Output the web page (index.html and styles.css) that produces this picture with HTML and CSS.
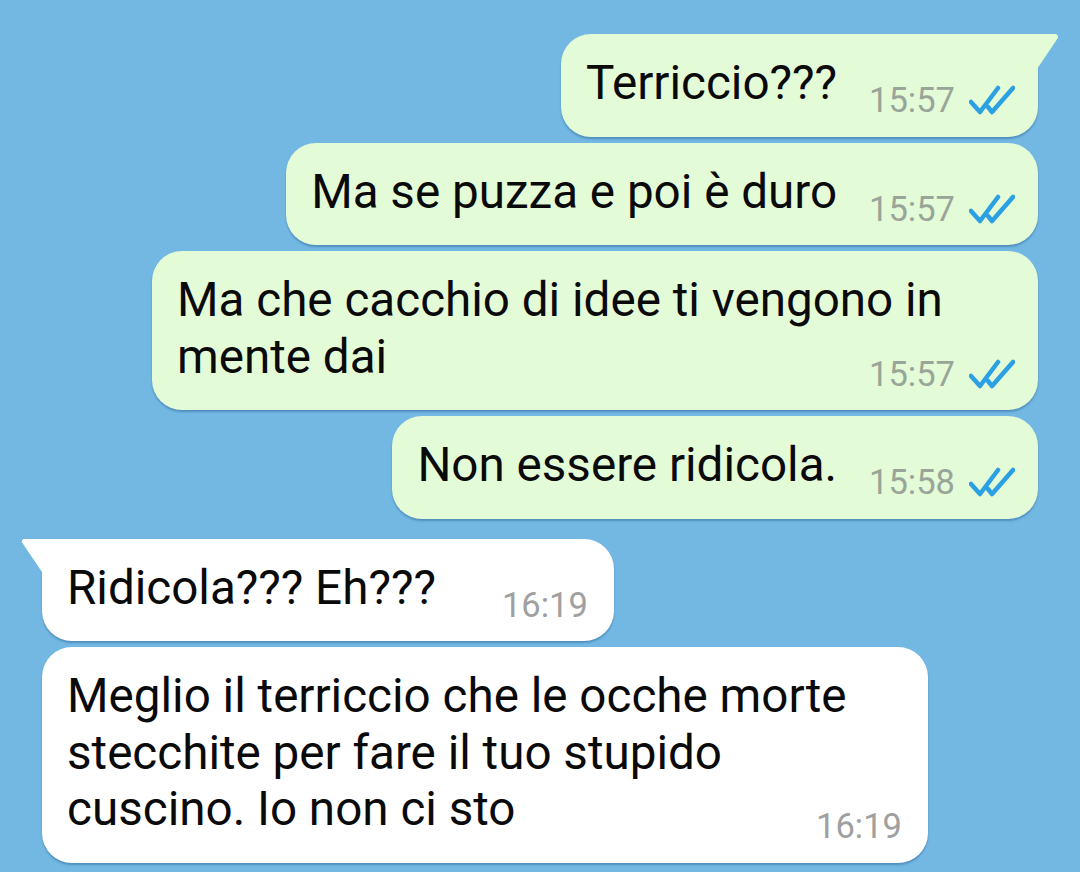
FILE: index.html
```html
<!DOCTYPE html>
<html lang="it">
<head>
<meta charset="utf-8">
<link rel="stylesheet" href="styles.css">
</head>
<body>
<div class="chat">
  <div class="group out">
    <div class="bubble first">Terriccio???<span class="meta"><span class="time">15:57</span><svg class="check" viewBox="0 0 46 30"><path d="M2 17 L11 27 L29 3 M19 22 L23 27 L44 3"/></svg></span></div>
    <div class="bubble">Ma se puzza e poi è duro<span class="meta"><span class="time">15:57</span><svg class="check" viewBox="0 0 46 30"><path d="M2 17 L11 27 L29 3 M19 22 L23 27 L44 3"/></svg></span></div>
    <div class="bubble">Ma che cacchio di idee ti vengono in mente dai<span class="meta"><span class="time">15:57</span><svg class="check" viewBox="0 0 46 30"><path d="M2 17 L11 27 L29 3 M19 22 L23 27 L44 3"/></svg></span></div>
    <div class="bubble">Non essere ridicola.<span class="meta"><span class="time">15:58</span><svg class="check" viewBox="0 0 46 30"><path d="M2 17 L11 27 L29 3 M19 22 L23 27 L44 3"/></svg></span></div>
  </div>
  <div class="group in">
    <div class="bubble first">Ridicola??? Eh???<span class="meta"><span class="time">16:19</span></span></div>
    <div class="bubble">Meglio il terriccio che le ocche morte stecchite per fare il tuo stupido cuscino. Io non ci sto<span class="meta"><span class="time">16:19</span></span></div>
  </div>
</div>
</body>
</html>
```

FILE: styles.css
```css
html, body {
  margin: 0;
  padding: 0;
}

body {
  width: 1080px;
  height: 872px;
  overflow: hidden;
  background: #72b8e3;
  font-family: Roboto, "Noto Sans", sans-serif;
  color: #0a0a0a;
}

.chat {
  display: flex;
  flex-direction: column;
  gap: 20px;
  padding: 34px 42px 0 42px;
}

.group {
  display: flex;
  flex-direction: column;
  gap: 6px;
}

.group.out {
  align-items: flex-end;
}

.group.in {
  align-items: flex-start;
}

.bubble {
  position: relative;
  display: flow-root;
  box-sizing: border-box;
  max-width: 886px;
  padding: 21px 23px 25px 25px;
  border-radius: 30px;
  font-size: 47.6px;
  line-height: 56.5px;
  box-shadow: 0 2px 2px rgba(20, 70, 120, 0.35);
}

.out .bubble {
  background: #e4fbd8;
}

.in .bubble {
  background: #ffffff;
  padding-right: 26px;
}

.out .bubble.first {
  border-top-right-radius: 0;
}

.in .bubble.first {
  border-top-left-radius: 0;
}

.bubble.first::before {
  content: "";
  position: absolute;
  top: 0;
  width: 24px;
  height: 38px;
  background: inherit;
}

.out .bubble.first::before {
  right: -21px;
  clip-path: polygon(0 0, 88% 0, 95% 4%, 96% 10%, 0 100%);
}

.in .bubble.first::before {
  left: -21px;
  clip-path: polygon(100% 0, 12% 0, 5% 4%, 4% 10%, 100% 100%);
}

.meta {
  float: right;
  display: flex;
  align-items: center;
  gap: 14px;
  height: 24px;
  margin: 33px 0 -8px 32px;
  font-size: 34.5px;
  line-height: 24px;
}

.in .meta {
  margin-left: 66px;
}

.out .time {
  color: #99a599;
}

.in .time {
  color: #a0a0a0;
}

.check {
  width: 46px;
  height: 30px;
  fill: none;
  stroke: #2ba0e2;
  stroke-width: 4.5;
  stroke-linecap: round;
  stroke-linejoin: round;
}
```
